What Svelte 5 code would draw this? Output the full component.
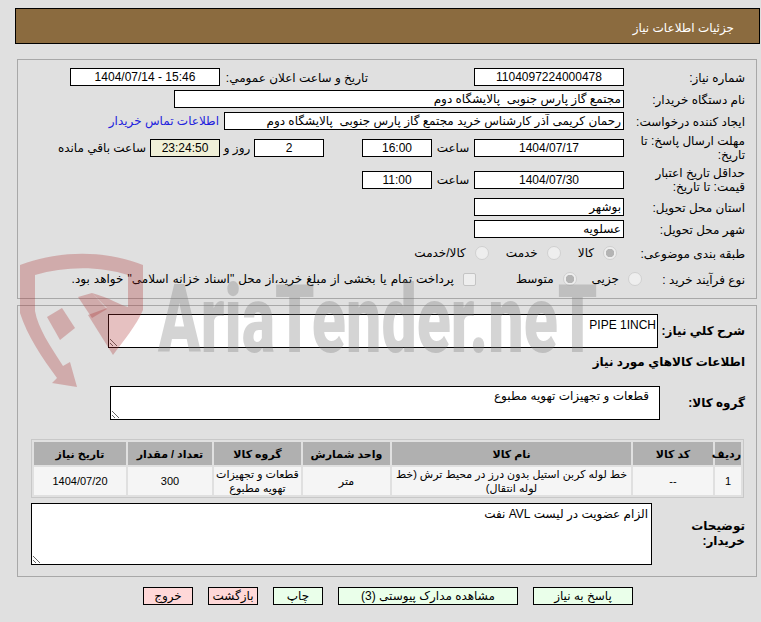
<script>
  const columns = [
    { title: 'ردیف', width: 26 },
    { title: 'کد کالا', width: 80 },
    { title: 'نام کالا', width: 239 },
    { title: 'واحد شمارش', width: 87 },
    { title: 'گروه کالا', width: 87 },
    { title: 'تعداد / مقدار', width: 84 },
    { title: 'تاریخ نیاز', width: 92 }
  ];
  const row = [
    '1',
    '--',
    'خط لوله کربن استیل بدون درز در محیط ترش (خط لوله انتقال)',
    'متر',
    'قطعات و تجهیزات تهویه مطبوع',
    '300',
    '1404/07/20'
  ];
  const buyer = 'مجتمع گاز پارس جنوبی  پالایشگاه دوم';
  const creator = 'رحمان کریمی آذر کارشناس خرید مجتمع گاز پارس جنوبی  پالایشگاه دوم';
</script>

<div class="page" dir="rtl">
  <header class="head">جزئیات اطلاعات نیاز</header>

  <section class="panel top">
    <div class="row">
      <span class="lbl">شماره نیاز:</span>
      <input class="f w150 c" readonly value="1104097224000478" />
      <span class="lbl2">تاریخ و ساعت اعلان عمومي:</span>
      <input class="f w150 c" readonly value="1404/07/14 - 15:46" dir="ltr" />
    </div>
    <div class="row">
      <span class="lbl">نام دستگاه خریدار:</span>
      <input class="f w450" readonly value={buyer} />
    </div>
    <div class="row">
      <span class="lbl">ایجاد کننده درخواست:</span>
      <input class="f w400" readonly value={creator} />
      <span class="link">اطلاعات تماس خریدار</span>
    </div>
    <div class="row tall">
      <span class="lbl">مهلت ارسال پاسخ: تا تاریخ:</span>
      <input class="f w150 c" readonly value="1404/07/17" />
      <span class="unit">ساعت</span>
      <input class="f w70 c" readonly value="16:00" />
      <input class="f w70 c days" readonly value="2" />
      <span class="unit and">روز و</span>
      <input class="f w70 c timer" readonly value="23:24:50" />
      <span class="left">ساعت باقي مانده</span>
    </div>
    <div class="row tall">
      <span class="lbl">حداقل تاریخ اعتبار قیمت: تا تاریخ:</span>
      <input class="f w150 c" readonly value="1404/07/30" />
      <span class="unit">ساعت</span>
      <input class="f w70 c" readonly value="11:00" />
    </div>
    <div class="row">
      <span class="lbl">استان محل تحویل:</span>
      <input class="f w150" readonly value="بوشهر" />
    </div>
    <div class="row">
      <span class="lbl">شهر محل تحویل:</span>
      <input class="f w150" readonly value="عسلویه" />
    </div>
    <div class="row opt">
      <span class="lbl">طبقه بندی موضوعی:</span>
      <span class="choices kind">
        <label><input type="radio" name="kind" checked disabled />کالا</label>
        <label><input type="radio" name="kind" disabled />خدمت</label>
        <label><input type="radio" name="kind" disabled />کالا/خدمت</label>
      </span>
    </div>
    <div class="row opt">
      <span class="lbl">نوع فرآیند خرید :</span>
      <span class="choices proc">
        <label><input type="radio" name="proc" disabled />جزیی</label>
        <label><input type="radio" name="proc" checked disabled />متوسط</label>
        <label class="pay"><input type="checkbox" disabled />پرداخت تمام یا بخشی از مبلغ خرید،از محل "اسناد خزانه اسلامی" خواهد بود.</label>
      </span>
    </div>
  </section>

  <section class="panel bottom">
    <div class="desc">
      <strong class="blbl">شرح كلي نياز:</strong>
      <textarea class="ta ta1" readonly>PIPE 1INCH</textarea>
    </div>
    <strong class="sub">اطلاعات كالاهاي مورد نياز</strong>
    <div class="group">
      <strong class="blbl">گروه کالا:</strong>
      <textarea class="ta ta2" readonly>قطعات و تجهیزات تهویه مطبوع</textarea>
    </div>

    <table>
      <thead>
        <tr>
          {#each columns as col}
            <th style="width:{col.width}px">{col.title}</th>
          {/each}
        </tr>
      </thead>
      <tbody>
        <tr>
          {#each row as cell}
            <td>{cell}</td>
          {/each}
        </tr>
      </tbody>
    </table>

    <div class="notes">
      <strong class="blbl">توضیحات خریدار:</strong>
      <textarea class="ta ta3" readonly>الزام عضویت در لیست AVL نفت</textarea>
    </div>
  </section>

  <div class="actions">
    <button class="go w100">پاسخ به نیاز</button>
    <button class="go w180">مشاهده مدارک پیوستی (3)</button>
    <button class="go w50">چاپ</button>
    <button class="stop w50">بازگشت</button>
    <button class="stop w50">خروج</button>
  </div>

  <div class="wm" aria-hidden="true">
    <svg width="761" height="622" viewBox="0 0 761 622">
      <path fill-rule="evenodd" d="M20 265 C60 250 105 250 143 265 L143 310 C136 326 124 340 113 355 L88 315 L107 308 L92 293 C110 298 120 305 128 307 L128 275 C100 266 65 266 35 275 L35 311 C38 328 50 346 63 366 L70 362 L77 387 L52 383 L57 378 C42 358 27 335 20 313 Z" />
      <path d="M78 297 L92 293 L107 309 L92 318 Z" />
      <path d="M47 317 L62 308 L75 328 L60 340 Z" />
    </svg>
    <span class="wm-text">AriaTender.neT</span>
  </div>
</div>

<style>
  :global(body) { margin: 0; background: #e0e0e0; }
  .page { position: relative; width: 761px; height: 622px; overflow: hidden; box-sizing: border-box; padding-top: 8px; font: 12px/14px "Liberation Sans", "DejaVu Sans", sans-serif; color: #000; }
  .head { box-sizing: border-box; height: 36px; margin: 0 1px 0 15px; padding: 12px 25px 0 0; background: #8b6b3f; border: 1px solid #000; color: #fff; }
  .panel { border: 1px solid #a8a8a8; margin: 0 4px 0 17px; padding: 0 11px; box-sizing: border-box; }
  .top { height: 240px; margin-top: 15px; padding-top: 8px; display: flex; flex-direction: column; gap: 4px; }
  .bottom { height: 272px; margin-top: 6px; padding-top: 8px; }
  .row { display: flex; align-items: center; height: 18px; }
  .row.tall { height: 28px; }
  .row.opt { height: 22px; }
  .lbl { width: 113px; margin-left: 8px; padding-top: 1px; flex: none; }
  .tall .lbl { padding-top: 0; }
  .lbl2 { margin: 0 106px 0 0; padding-top: 1px; width: 148px; flex: none; }
  .f { box-sizing: border-box; height: 18px; border: 1px solid #000; background: #fff; padding: 0 2px; font: inherit; color: #000; flex: none; text-align: right; outline: none; }
  .c { text-align: center; }
  .w150 { width: 150px; }
  .w70 { width: 70px; }
  .w400 { width: 400px; }
  .w450 { width: 450px; }
  .link { color: #2222dd; margin-right: 5px; }
  .unit { width: 42px; text-align: center; flex: none; }
  .and { width: 34px; }
  .days { margin-right: 38px; }
  .timer { background: #f0f0d8; }
  .left { margin-right: 4px; }
  .choices { display: flex; align-items: center; }
  .choices label { display: flex; align-items: center; }
  .choices input { appearance: none; margin: 0 0 0 9px; width: 14px; height: 14px; border: 1px solid #d0d0d0; border-radius: 50%; background: #eee; box-sizing: border-box; }
  .choices input:checked { background: radial-gradient(circle, #b4b4b4 0 4px, #eee 4.5px); }
  .choices input[type="checkbox"] { border-radius: 2px; width: 13px; height: 13px; margin-left: 9px; border-color: #c4c4c4; }
  .kind { margin-right: 7px; gap: 17px; }
  .proc { margin-right: -18px; gap: 15px; }
  .proc .pay { margin-right: 25px; word-spacing: 0.7px; }
  .desc, .group, .notes { display: flex; align-items: center; }
  .blbl { width: 87px; flex: none; font-weight: 700; line-height: 15px; }
  .ta { box-sizing: border-box; border: 1px solid #000; background: #fff; font: inherit; padding: 1px; color: #000; outline: none; display: block; flex: none; }
  .ta1 { width: 550px; height: 34px; padding-top: 3px; }
  .ta2 { width: 550px; height: 34px; padding: 2px 10px; margin-right: -2px; }
  .ta3 { width: 621px; height: 62px; padding: 3px; margin-right: 6px; }
  .sub { display: block; margin: 7px 0 0; height: 14px; font-weight: 700; }
  .group { margin-top: 17px; }
  table { margin: 19px 1px 0 0; width: 713px; table-layout: fixed; border: 1px solid #c8c8c8; border-spacing: 2px; border-collapse: separate; font-size: 11px; }
  th { height: 23px; padding: 0; background: #b0b0b0; font-weight: 700; text-align: center; }
  td { height: 28px; padding: 0; background: #f5f5f5; text-align: center; }
  .notes { margin-top: 5px; }
  .actions { display: flex; gap: 15px; margin: 10px 0 0; padding-right: 128px; }
  button { box-sizing: border-box; height: 18px; padding: 0; border: 1px solid #000; font: inherit; color: #000; }
  .go { background: #eaffea; }
  .stop { background: #ffd8d8; }
  .w100 { width: 100px; }
  .w180 { width: 180px; }
  .w50 { width: 50px; }
  .wm { position: absolute; inset: 0; pointer-events: none; }
  .wm svg { position: absolute; left: 0; top: 0; }
  .wm path { fill: rgba(170, 40, 40, 0.29); }
  .wm-text { position: absolute; left: 158px; top: 260px; direction: ltr; font: 900 94px/120px Roboto, sans-serif; color: rgba(120, 120, 120, 0.32); transform: scaleX(0.667); transform-origin: left top; white-space: nowrap; }
</style>
